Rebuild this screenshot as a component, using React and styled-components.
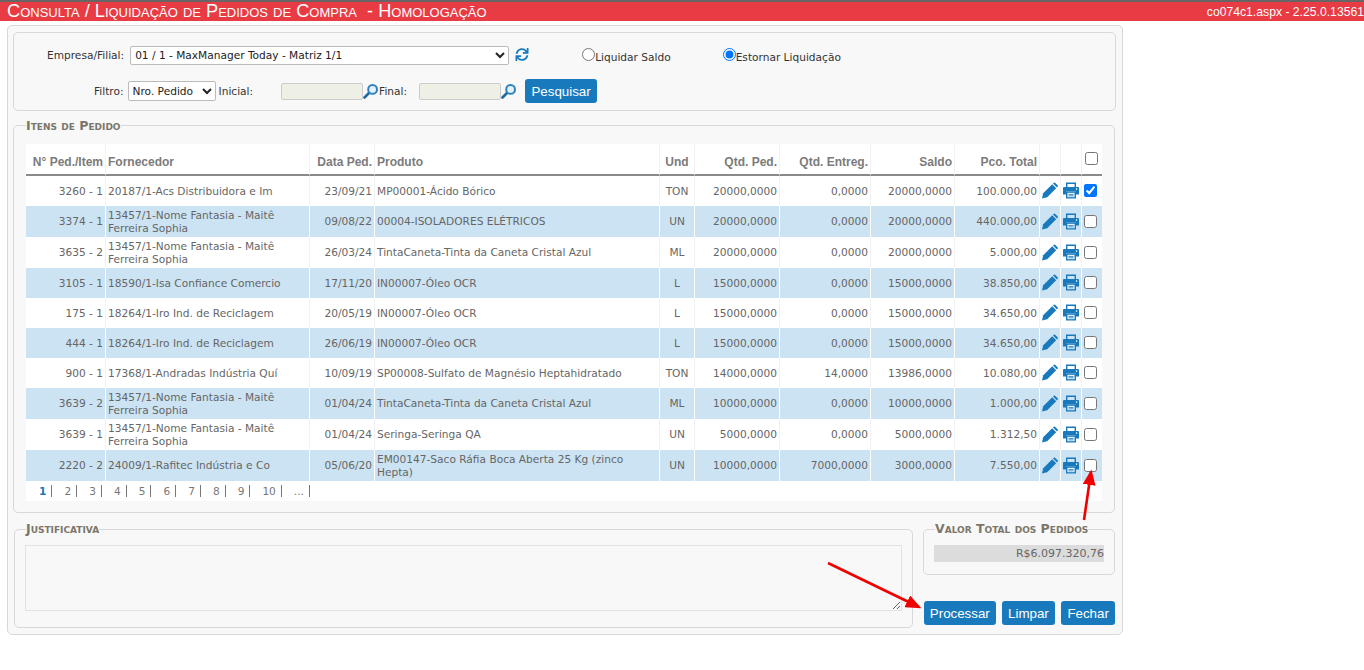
import React from "react";
import styled, { createGlobalStyle } from "styled-components";
import { FaSync } from "react-icons/fa";

const GlobalStyle = createGlobalStyle`
  html, body {
    margin: 0;
    padding: 0;
    background: #fff;
    overflow: hidden;
    font-family: "DejaVu Sans", Verdana, sans-serif;
    font-size: 10.6px;
    color: #555;
  }
  * { box-sizing: border-box; }
`;

const TitleBar = styled.div`
  height: 21px;
  border-top: 2px solid #666;
  background: #e93b43;
  color: #fff;
  font-family: "Liberation Sans", Arial, sans-serif;
  display: flex;
  justify-content: space-between;
  align-items: center;
  padding-left: 7px;
  white-space: pre;
`;

const Title = styled.div`
  font-size: 18.2px;
  font-variant: small-caps;
`;

const Version = styled.div`
  font-size: 12.2px;
  white-space: nowrap;
`;

const Panel = styled.div`
  position: relative;
  width: 1116px;
  height: 610px;
  margin: 4px 0 0 7px;
  padding: 6px 6px 0 5px;
  background: #f8f8f8;
  border: 1px solid #d8d8d8;
  border-radius: 5px;
`;

const FilterBox = styled.div`
  height: 79px;
  width: 1103px;
  border: 1px solid #d8d8d8;
  border-radius: 5px;
  padding-top: 12px;
`;

const FilterRow = styled.div`
  display: flex;
  align-items: center;
  height: ${(p) => p.$h}px;
  padding-left: ${(p) => p.$left}px;
  margin-bottom: ${(p) => p.$mb || 0}px;
  color: #333;
`;

const Select = styled.select`
  width: ${(p) => p.$w}px;
  height: ${(p) => p.$h}px;
  margin: 0 3px 0 ${(p) => p.$ml}px;
  padding-left: 0;
  font-family: "DejaVu Sans", Verdana, sans-serif;
  font-size: 10.6px;
  color: #222;
  background: #fff;
  border: 1px solid #bbb;
  border-radius: 2px;
`;

const RefreshIcon = styled(FaSync)`
  width: 14px;
  height: 13px;
  margin: 0 0 2px 3px;
  color: #187abd;
`;

const RadioLabel = styled.label`
  display: flex;
  align-items: center;
  margin-left: ${(p) => p.$ml}px;
  padding-top: 3px;
  input {
    width: 13px;
    height: 13px;
    margin: -4px 0 0 0;
  }
`;

const TextInput = styled.input`
  width: 82px;
  height: 17px;
  margin-left: ${(p) => p.$ml}px;
  background: #eef0e6;
  border: 1px solid #ccc;
  border-radius: 2px;
`;

const LensIcon = styled.svg`
  width: 16px;
  height: 16px;
  flex: none;
`;

const Lens = () => (
  <LensIcon viewBox="0 0 16 16">
    <path d="M1.5 14.5 L6 10" stroke="#1f6a9c" strokeWidth="2.6" strokeLinecap="round" />
    <circle cx="9.6" cy="6.4" r="4.4" fill="#e6f0f7" stroke="#2a83bd" strokeWidth="2" />
  </LensIcon>
);

const Button = styled.button`
  height: 24px;
  padding: 0;
  width: ${(p) => p.$w}px;
  margin-left: ${(p) => p.$ml || 0}px;
  background: #187abd;
  color: #fff;
  border: 0;
  border-radius: 3px;
  font-family: "Liberation Sans", Arial, sans-serif;
  font-size: 13.33px;
`;

const Fieldset = styled.fieldset`
  margin: ${(p) => p.$margin || 0};
  padding: ${(p) => p.$padding || 0};
  width: ${(p) => p.$w}px;
  height: ${(p) => p.$h}px;
  min-width: 0;
  border: 1px solid #d8d8d8;
  border-radius: 5px;
`;

const Legend = styled.legend`
  margin-left: ${(p) => p.$ml || 0}px;
  padding: ${(p) => p.$pt || 0}px 0 0 0;
  font-family: "DejaVu Sans", Verdana, sans-serif;
  font-size: 12.5px;
  font-weight: bold;
  font-variant: small-caps;
  color: #7b766a;
  line-height: 12px;
`;

const Table = styled.table`
  width: 1076px;
  table-layout: fixed;
  border-collapse: separate;
  border-spacing: 0;
  background: #fff;
`;

const HeadCell = styled.th`
  height: 32px;
  padding: 6px 2px 0 2px;
  font-family: "Liberation Sans", Arial, sans-serif;
  font-size: 12px;
  font-weight: bold;
  color: #7b7b7b;
  text-align: ${(p) => p.$align || "left"};
  border-right: 1px solid #f2f2f2;
  border-bottom: 2px solid #8a8a8a;
  white-space: nowrap;
  &:last-child { border-right: 0; }
`;

const HeadCheck = styled.input`
  display: block;
  width: 13px;
  height: 13px;
  margin: 0 0 7px 1px;
`;

const Row = styled.tr`
  background: ${(p) => (p.$odd ? "#cce3f3" : "#fff")};
`;

const Cell = styled.td`
  height: 30px;
  padding: 3px 2px;
  line-height: 12.5px;
  color: #666;
  text-align: ${(p) => p.$align || "left"};
  border-right: 1px solid ${(p) => (p.$odd ? "#fff" : "#f2f2f2")};
  overflow: hidden;
  &:last-child { border-right: 0; }
`;

const ActionCell = styled(Cell)`
  padding: 0;
  text-align: center;
  svg { display: block; margin: -1px auto 0; }
  input {
    display: block;
    width: 13px;
    height: 13px;
    margin: -1px 0 0 2px;
  }
`;

const Pager = styled.div`
  display: flex;
  height: 20px;
  width: 1076px;
  background: #fff;
  align-items: center;
`;

const PageLink = styled.span`
  padding: 0 5px 0 12px;
  height: 12px;
  line-height: 12px;
  color: ${(p) => (p.$active ? "#187abd" : "#777")};
  font-weight: ${(p) => (p.$active ? "bold" : "normal")};
  border-right: 1px solid #777;
  &:first-child { padding-left: 13px; }
`;

const BottomRow = styled.div`
  display: flex;
  margin-top: 10px;
`;

const Notes = styled.textarea`
  display: block;
  width: 877px;
  height: 66px;
  background: #f8f8f8;
  border: 1px solid #e2e2e2;
`;

const Side = styled.div`
  margin-left: 10px;
  width: 192px;
`;

const TotalValue = styled.div`
  height: 17px;
  width: 170px;
  background: #dcdcdc;
  color: #666;
  text-align: right;
  line-height: 17px;
  font-size: 11px;
`;

const Actions = styled.div`
  display: flex;
  margin-top: 26px;
  margin-left: 1px;
`;

const ArrowLayer = styled.svg`
  position: absolute;
  left: -8px;
  top: -26px;
  width: 1364px;
  height: 670px;
  pointer-events: none;
`;

const IconSvg = styled.svg`
  width: 16px;
  height: 17px;
  fill: #187abd;
`;

const PencilIcon = () => (
  <IconSvg viewBox="0 0 16 16">
    <path d="M0 16 L1.2 10.8 L10.2 1.8 L14.2 5.8 L5.2 14.8 Z" />
    <path d="M11 1 L11.9 .3 Q12.6 -.2 13.3 .4 L15.6 2.7 Q16.2 3.4 15.7 4.1 L15 5 Z" />
  </IconSvg>
);

const PrintIcon = () => (
  <IconSvg viewBox="0 0 16 16">
    <path d="M3 0 H13 V4.5 H11.6 V1.4 H4.4 V4.5 H3 Z" />
    <path d="M1 4.5 H15 Q16 4.5 16 5.5 V12 H13 V9 H3 V12 H0 V5.5 Q0 4.5 1 4.5 Z" />
    <path d="M3 9 H13 V16 H3 Z" />
    <path d="M4.4 10.3 H11.6 V14.7 H4.4 Z" fill="#eaf4fb" />
    <path d="M5.5 11.4 H10.5 V12.2 H5.5 Z M5.5 13 H10.5 V13.8 H5.5 Z" />
    <circle cx="13.6" cy="6.6" r=".8" fill="#fff" />
  </IconSvg>
);

const columns = [
  { label: "N° Ped./Item", w: 80, align: "right" },
  { label: "Fornecedor", w: 204 },
  { label: "Data Ped.", w: 65, align: "right" },
  { label: "Produto", w: 285 },
  { label: "Und", w: 35, align: "center" },
  { label: "Qtd. Ped.", w: 85, align: "right" },
  { label: "Qtd. Entreg.", w: 91, align: "right" },
  { label: "Saldo", w: 84, align: "right" },
  { label: "Pco. Total", w: 85, align: "right" },
];

const fantasia = "13457/1-Nome Fantasia - Maitê Ferreira Sophia";
const caneta = "TintaCaneta-Tinta da Caneta Cristal Azul";

const rows = [
  ["3260 - 1", "20187/1-Acs Distribuidora e Im", "23/09/21", "MP00001-Ácido Bórico", "TON", "20000,0000", "0,0000", "20000,0000", "100.000,00"],
  ["3374 - 1", fantasia, "09/08/22", "00004-ISOLADORES ELÉTRICOS", "UN", "20000,0000", "0,0000", "20000,0000", "440.000,00"],
  ["3635 - 2", fantasia, "26/03/24", caneta, "ML", "20000,0000", "0,0000", "20000,0000", "5.000,00"],
  ["3105 - 1", "18590/1-Isa Confiance Comercio", "17/11/20", "IN00007-Óleo OCR", "L", "15000,0000", "0,0000", "15000,0000", "38.850,00"],
  ["175 - 1", "18264/1-Iro Ind. de Reciclagem", "20/05/19", "IN00007-Óleo OCR", "L", "15000,0000", "0,0000", "15000,0000", "34.650,00"],
  ["444 - 1", "18264/1-Iro Ind. de Reciclagem", "26/06/19", "IN00007-Óleo OCR", "L", "15000,0000", "0,0000", "15000,0000", "34.650,00"],
  ["900 - 1", "17368/1-Andradas Indústria Quí", "10/09/19", "SP00008-Sulfato de Magnésio Heptahidratado", "TON", "14000,0000", "14,0000", "13986,0000", "10.080,00"],
  ["3639 - 2", fantasia, "01/04/24", caneta, "ML", "10000,0000", "0,0000", "10000,0000", "1.000,00"],
  ["3639 - 1", fantasia, "01/04/24", "Seringa-Seringa QA", "UN", "5000,0000", "0,0000", "5000,0000", "1.312,50"],
  ["2220 - 2", "24009/1-Rafitec Indústria e Co", "05/06/20", "EM00147-Saco Ráfia Boca Aberta 25 Kg (zinco Hepta)", "UN", "10000,0000", "7000,0000", "3000,0000", "7.550,00"],
];

const pages = ["1", "2", "3", "4", "5", "6", "7", "8", "9", "10", "..."];

const Arrows = () => (
  <ArrowLayer viewBox="0 0 1364 670">
    <defs>
      <marker id="head" markerWidth="6" markerHeight="5" refX="5" refY="2.5" orient="auto">
        <path d="M0 0 L6 2.5 L0 5 Z" fill="#f00000" />
      </marker>
    </defs>
    <line x1="1084" y1="520" x2="1091" y2="472" stroke="#f00000" strokeWidth="2.6" markerEnd="url(#head)" />
    <line x1="828" y1="563" x2="919" y2="607" stroke="#f00000" strokeWidth="2.6" markerEnd="url(#head)" />
  </ArrowLayer>
);

const App = () => (
  <>
    <GlobalStyle />
    <TitleBar>
      <Title>Consulta / Liquidação de Pedidos de Compra  - Homologação</Title>
      <Version>co074c1.aspx - 2.25.0.13561</Version>
    </TitleBar>
    <Panel>
      <FilterBox>
        <FilterRow $h={20} $left={33} $mb={14}>
          Empresa/Filial:
          <Select $ml={6} $w={379} $h={19} defaultValue="1">
            <option value="1">01 / 1 - MaxManager Today - Matriz 1/1</option>
          </Select>
          <RefreshIcon />
          <RadioLabel $ml={53}>
            <input type="radio" name="acao" />
            Liquidar Saldo
          </RadioLabel>
          <RadioLabel $ml={52}>
            <input type="radio" name="acao" defaultChecked />
            Estornar Liquidação
          </RadioLabel>
        </FilterRow>
        <FilterRow $h={24} $left={80}>
          Filtro:
          <Select $ml={4} $w={88} $h={20} defaultValue="1">
            <option value="1">Nro. Pedido</option>
          </Select>
          Inicial:
          <TextInput $ml={28} />
          <Lens />
          Final:
          <TextInput $ml={12} />
          <Lens />
          <Button $w={72} $ml={8}>Pesquisar</Button>
        </FilterRow>
      </FilterBox>
      <Fieldset $w={1102} $h={395} $margin="7px 0 0 0" $padding="12px 12px 0 12px">
        <Legend $pt={2}>Itens de Pedido</Legend>
        <Table>
          <colgroup>
            {columns.map((c) => (
              <col key={c.label} style={{ width: c.w }} />
            ))}
            <col style={{ width: 21 }} />
            <col style={{ width: 21 }} />
            <col style={{ width: 20 }} />
          </colgroup>
          <thead>
            <tr>
              {columns.map((c) => (
                <HeadCell key={c.label} $align={c.align}>{c.label}</HeadCell>
              ))}
              <HeadCell />
              <HeadCell />
              <HeadCell>
                <HeadCheck type="checkbox" />
              </HeadCell>
            </tr>
          </thead>
          <tbody>
            {rows.map((r, i) => {
              const odd = i % 2 === 1;
              return (
                <Row key={i} $odd={odd}>
                  {r.map((v, j) => (
                    <Cell key={j} $odd={odd} $align={columns[j].align}>{v}</Cell>
                  ))}
                  <ActionCell $odd={odd}><PencilIcon /></ActionCell>
                  <ActionCell $odd={odd}><PrintIcon /></ActionCell>
                  <ActionCell $odd={odd}>
                    <input type="checkbox" defaultChecked={i === 0} />
                  </ActionCell>
                </Row>
              );
            })}
          </tbody>
        </Table>
        <Pager>
          {pages.map((p, i) => (
            <PageLink key={p} $active={i === 0}>{p}</PageLink>
          ))}
        </Pager>
      </Fieldset>
      <BottomRow>
        <Fieldset $w={899} $h={105} $margin="0 0 0 1px" $padding="10px 10px 0 10px">
          <Legend $ml={1}>Justificativa</Legend>
          <Notes />
        </Fieldset>
        <Side>
          <Fieldset $w={192} $h={52} $padding="10px 10px 0 10px">
            <Legend $ml={1}>Valor Total dos Pedidos</Legend>
            <TotalValue>R$6.097.320,76</TotalValue>
          </Fieldset>
          <Actions>
            <Button $w={72}>Processar</Button>
            <Button $w={54} $ml={6}>Limpar</Button>
            <Button $w={54} $ml={6}>Fechar</Button>
          </Actions>
        </Side>
      </BottomRow>
      <Arrows />
    </Panel>
  </>
);

export default App;
